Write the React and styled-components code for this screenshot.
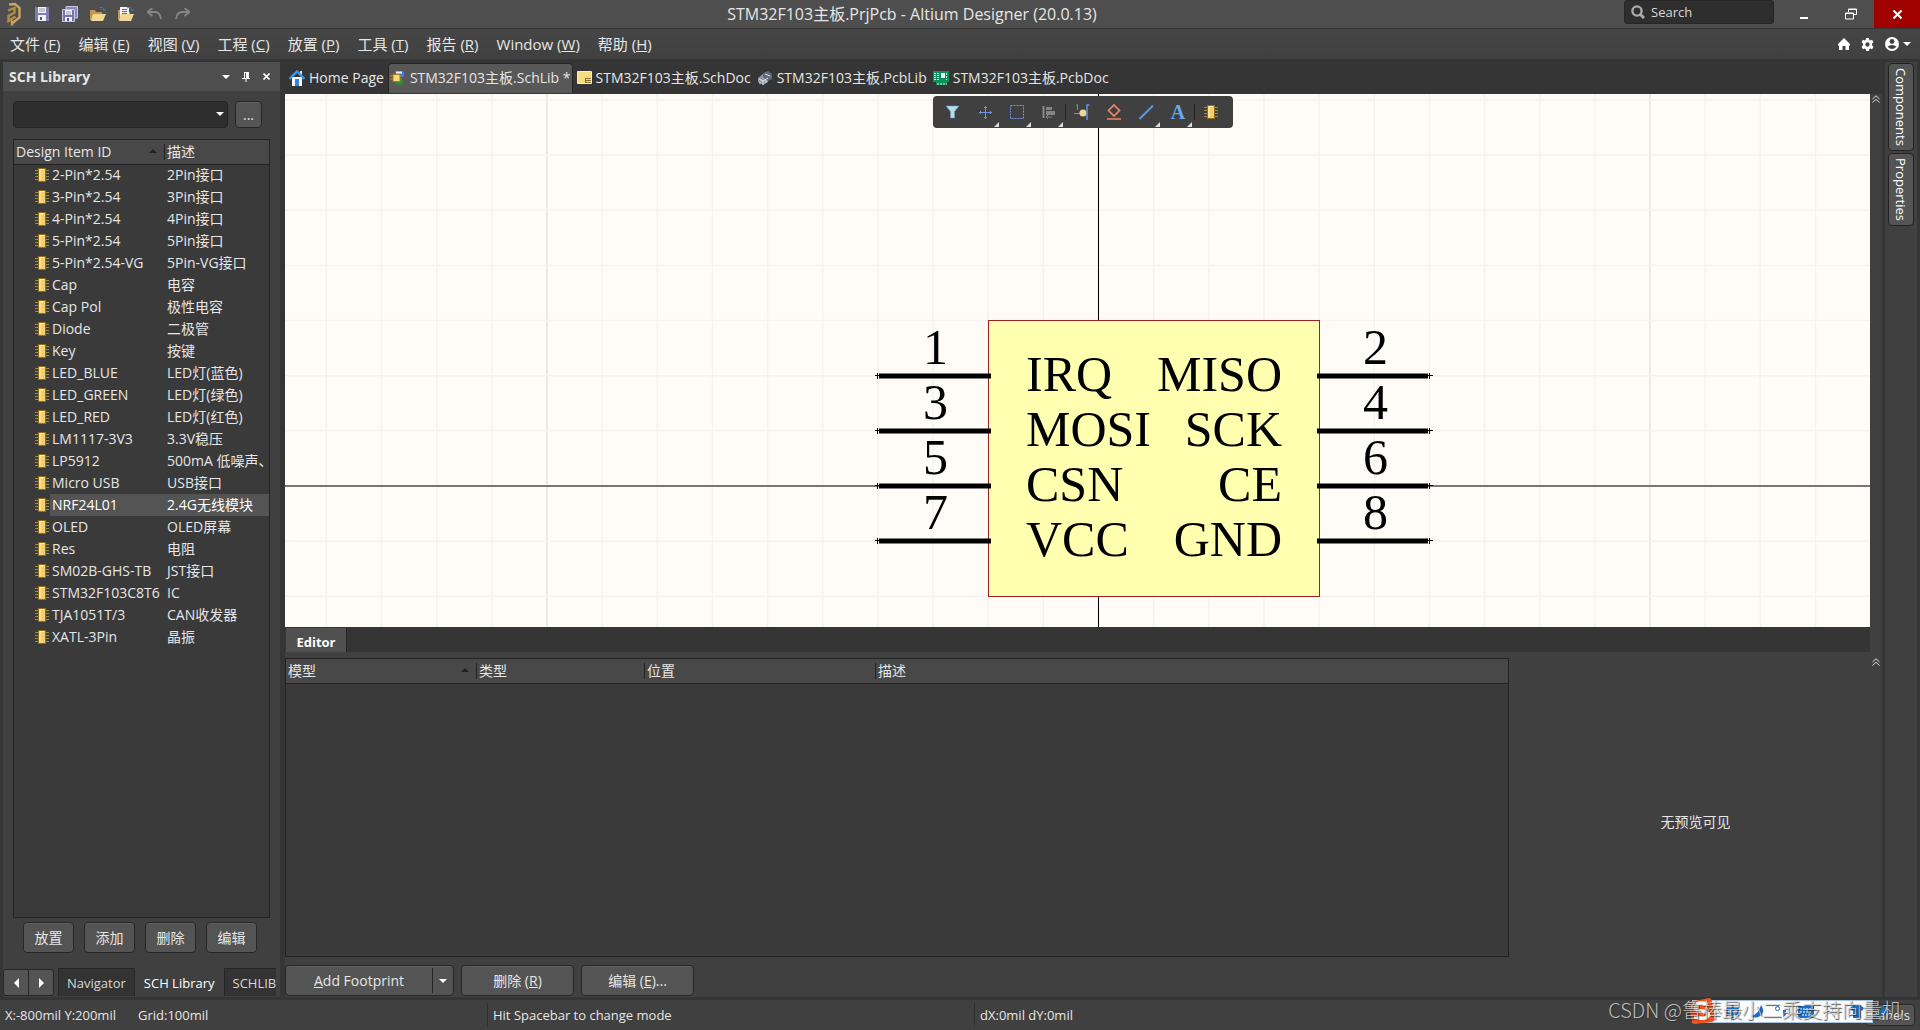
import React from 'react'
import styled, { createGlobalStyle } from 'styled-components'

const GlobalStyle = createGlobalStyle`
  * {
    box-sizing: border-box;
  }
  body {
    margin: 0;
    background: #353535;
    color: #e6e6e6;
    font-family: 'Open Sans', 'Noto Sans CJK SC', sans-serif;
    font-size: 14px;
    line-height: 20px;
  }
  button, input, select {
    font: inherit;
    color: inherit;
  }
  svg {
    display: block;
    flex: none;
  }
`

const Page = styled.div`
  display: flex;
  flex-direction: column;
  min-height: 100vh;
`

/* title bar */

const TitleBar = styled.header`
  display: flex;
  align-items: stretch;
  height: 29px;
  background: #4e4e4e;
  border-bottom: 1px solid #333;
`
const QuickAccess = styled.div`
  display: flex;
  align-items: center;
  gap: 12px;
  padding-left: 6px;
`
const IconButton = styled.button`
  display: flex;
  align-items: center;
  justify-content: center;
  width: ${(p) => p.$w || 16}px;
  padding: 0;
  border: 0;
  background: ${(p) => p.$bg || 'none'};
`
const WindowTitle = styled.h1`
  flex: 1;
  margin: 0;
  padding-left: 10px;
  font-size: 16px;
  font-weight: 400;
  line-height: 28px;
  text-align: center;
`
const SearchBox = styled.label`
  display: flex;
  align-items: center;
  gap: 6px;
  width: 150px;
  height: 24px;
  margin-right: 6px;
  padding-left: 6px;
  background: #2e2e2e;
  border: 1px solid #262626;
  border-radius: 3px;
  input {
    width: 110px;
    padding: 0;
    border: 0;
    outline: 0;
    background: none;
    font-size: 13px;
  }
  input::placeholder {
    color: #d8d8d8;
    opacity: 1;
  }
`

/* menu bar */

const MenuBar = styled.nav`
  display: flex;
  align-items: center;
  gap: 18px;
  height: 30px;
  padding: 0 8px 0 10px;
  background: linear-gradient(#464646, #404040);
`
const MenuItem = styled.button`
  padding: 0;
  border: 0;
  background: none;
  font-size: 15px;
  white-space: nowrap;
`
const MenuTools = styled.div`
  display: flex;
  align-items: center;
  gap: 10px;
  margin-left: auto;
`

/* workspace */

const Workspace = styled.main`
  display: flex;
  flex: 1;
  padding: 0 3px;
  background: #353535;
  border-bottom: 3px solid #353535;
`
const LibraryPanel = styled.section`
  display: flex;
  flex-direction: column;
  width: 277px;
  margin-top: 3px;
  padding-bottom: 1px;
  background: #404040;
`
const PanelHeader = styled.div`
  display: flex;
  align-items: center;
  height: 29px;
  padding: 0 4px 0 6px;
  background: #4e4e4e;
  h2 {
    flex: 1;
    margin: 0;
    font-size: 14px;
    font-weight: 700;
  }
`
const FilterRow = styled.div`
  display: flex;
  gap: 7px;
  padding: 10px 18px 11px 10px;
`
const ComboWrap = styled.label`
  position: relative;
  flex: 1;
  select {
    width: 100%;
    height: 27px;
    appearance: none;
    background: #2e2e2e;
    border: 1px solid #242424;
    border-radius: 4px;
  }
  svg {
    position: absolute;
    right: 4px;
    top: 11px;
  }
`
const Button = styled.button`
  display: flex;
  align-items: center;
  justify-content: center;
  width: ${(p) => p.$w}px;
  height: ${(p) => p.$h || 31}px;
  padding: 0;
  background: #545454;
  border: 1px solid #262626;
  border-radius: 4px;
  box-shadow: inset 0 1px #606060;
  white-space: pre;
`
const TableBox = styled.div`
  flex: 1;
  margin: ${(p) => p.$margin || 0};
  background: #3a3a3a;
  border: 1px solid #232323;
`
const Grid = styled.table`
  width: 100%;
  table-layout: fixed;
  border-collapse: collapse;
  th {
    position: relative;
    height: 24px;
    padding: 0 2px;
    background: #484848;
    border-bottom: 1px solid #232323;
    font-weight: 400;
    text-align: left;
  }
  th + th {
    background: linear-gradient(#232323, #232323) 0 4px / 1px 16px no-repeat #484848;
    padding-left: 3px;
  }
  th svg {
    position: absolute;
    right: 7px;
    top: 9px;
  }
  td {
    height: 22px;
    padding: 0 0 0 2px;
    white-space: nowrap;
  }
  td:last-child {
    padding-left: 3px;
  }
`
const ItemRow = styled.tr`
  td + td {
    background: ${(p) => (p.$selected ? '#545454' : 'none')};
    color: ${(p) => (p.$selected ? '#fff' : '#e6e6e6')};
  }
  td:first-child {
    padding-left: 21px;
  }
`
const PanelActions = styled.div`
  display: flex;
  gap: 10px;
  padding: 4px 20px 15px;
`
const PanelTabs = styled.div`
  display: flex;
  height: 28px;
  overflow: hidden;
`
const Arrows = styled.div`
  display: flex;
  width: 51px;
  height: 27px;
  margin: 1px 4px 0 0;
  background: #545454;
  border: 1px solid #262626;
  border-radius: 3px;
  button + button {
    border-left: 1px solid #262626;
  }
`
const PanelTab = styled.button`
  flex: none;
  padding: 0 8px;
  border: 1px solid ${(p) => (p.$active ? '#404040' : '#262626')};
  border-width: 1px 1px 0;
  background: ${(p) => (p.$active ? '#404040' : '#333')};
  color: ${(p) => (p.$active ? '#fff' : '#d8d8d8')};
  font-size: 13px;
  &:last-child {
    padding-right: 0;
    border-right: 0;
  }
`

/* documents */

const Center = styled.section`
  position: relative;
  display: flex;
  flex: 1;
  flex-direction: column;
  min-width: 0;
  margin-left: 5px;
`
const DocTabs = styled.div`
  display: flex;
  align-items: flex-start;
  gap: 2px;
  height: 35px;
  padding: 4px 0 0 2px;
`
const DocTab = styled.button`
  display: flex;
  align-items: center;
  gap: 4px;
  height: 30px;
  padding: 0 1px 2px;
  border: 1px solid ${(p) => (p.$active ? '#262626' : 'transparent')};
  border-bottom: 0;
  border-radius: 4px 4px 0 0;
  background: ${(p) => (p.$active ? '#585858' : 'none')};
  white-space: nowrap;
`
const Row = styled.div`
  display: flex;
  flex: ${(p) => p.$flex || 'none'};
`
const Sheet = styled.div`
  flex: 1;
  min-width: 0;
  background: #fffcf7;
  svg {
    width: 100%;
    height: 100%;
  }
`
const Strip = styled.div`
  width: 12px;
  padding: ${(p) => p.$top || 1}px 0 0 2px;
  background: #404040;
`
const FloatingTools = styled.div`
  position: absolute;
  left: 50%;
  top: 37px;
  display: flex;
  align-items: center;
  width: 300px;
  height: 32px;
  margin-left: -151px;
  padding-left: 4px;
  background: #404040;
  border-radius: 4px;
`
const Tool = styled.button`
  position: relative;
  display: flex;
  align-items: center;
  justify-content: center;
  width: 32px;
  height: 32px;
  padding: 0;
  border: 0;
  background: none;
  svg {
    overflow: visible;
  }
  &::after {
    content: '';
    position: absolute;
    right: 2px;
    bottom: 1px;
    display: ${(p) => (p.$more ? 'block' : 'none')};
    border-left: 5px solid transparent;
    border-bottom: 5px solid #ddd;
  }
`
const ToolDivider = styled.i`
  width: 1px;
  height: 16px;
  background: #222;
`
const EditorTabs = styled.div`
  flex: 1;
  height: 25px;
  padding: 1px 0 0 1px;
  background: #353535;
`
const EditorTab = styled.button`
  width: 61px;
  height: 24px;
  padding: 3px 0 0;
  border: 0;
  border-right: 1px solid #262626;
  background: #505050;
  color: #fff;
  font-size: 13px;
  font-weight: 700;
`
const EditorBody = styled.div`
  display: flex;
  height: 345px;
  background: #404040;
`
const ModelArea = styled.div`
  display: flex;
  flex: 1224;
  flex-direction: column;
  padding-top: 6px;
`
const ModelActions = styled.div`
  display: flex;
  gap: 7px;
  padding: 8px 0 1px;
`
const SplitButton = styled(Button)`
  span {
    flex: 1;
  }
  i {
    display: flex;
    align-items: center;
    justify-content: center;
    width: 21px;
    height: 25px;
    border-left: 1px solid #262626;
  }
`
const Preview = styled.div`
  display: flex;
  flex: 349;
  align-items: center;
  justify-content: center;
  padding: 0 0 6px 12px;
`
const SideDock = styled.aside`
  display: flex;
  flex-direction: column;
  gap: 2px;
  width: 32px;
  margin: 3px 0 0 3px;
  padding: 1px 3px;
  background: #404040;
`
const SideTab = styled.button`
  width: 26px;
  padding: 4px 1px;
  writing-mode: vertical-rl;
  text-align: left;
  background: #545454;
  border: 1px solid #222;
  border-radius: 4px;
  color: #fff;
  font-size: 13px;
`

/* status bar */

const StatusBar = styled.footer`
  position: relative;
  display: flex;
  align-items: center;
  height: 30px;
  padding-left: 5px;
  background: #404040;
  font-size: 13px;
`
const StatusCell = styled.span`
  width: ${(p) => p.$w}px;
  padding-left: ${(p) => (p.$line ? 5 : 0)}px;
  border-left: ${(p) => (p.$line ? '1px solid #303030' : '0')};
  line-height: 24px;
  white-space: pre;
`
const PanelsButton = styled(Button)`
  margin: 0 5px 0 auto;
`
const InputMethodBar = styled.div`
  position: absolute;
  right: 47px;
  top: 0;
  display: flex;
  align-items: center;
  gap: 11px;
  width: 181px;
  height: 23px;
  padding-left: 32px;
  background: #fbfdff;
  border: 1px solid #a9c3dd;
  color: #1a6fc9;
  font-size: 15px;
  font-weight: 700;
  > svg:first-child {
    position: absolute;
    left: -5px;
    top: -4px;
  }
`
const Watermark = styled.div`
  position: absolute;
  right: 18px;
  top: -5px;
  color: rgba(215, 215, 215, 0.85);
  font-family: 'Noto Sans CJK SC', sans-serif;
  font-size: 20px;
  font-weight: 300;
  line-height: 30px;
  text-shadow: 1px 1px 1px rgba(40, 40, 40, 0.8);
  white-space: nowrap;
`

/* icons */

const Caret = ({ w = 8, color = '#fff' }) => (
  <svg width={w} height={w / 2} viewBox="0 0 8 4"><path d="M0 0h8L4 4z" fill={color} /></svg>
)
const SortMark = () => (
  <svg width="8" height="4" viewBox="0 0 8 4"><path d="M0 4h8L4 0z" fill="#222" /></svg>
)
const ChevronsUp = () => (
  <svg width="8" height="8" viewBox="0 0 8 8" fill="none" stroke="#ddd"><path d="M0.5 4L4 0.8 7.5 4M0.5 7.5L4 4.3 7.5 7.5" /></svg>
)
const ChipIcon = () => (
  <svg width="14" height="14" viewBox="0 0 14 14">
    <path d="M0 2.5h14M0 5.5h14M0 8.5h14M0 11.5h14" stroke="#a58a38" />
    <rect x="3.5" y="0.5" width="7" height="13" fill="#f6cf6d" stroke="#8e6d20" />
    <path d="M5 12V1.500h4" stroke="#fff0b8" fill="none" />
  </svg>
)
const LogoIcon = () => (
  <svg width="14" height="24" viewBox="0 0 14 24" fill="none" stroke="#c9a45c" strokeWidth="2.400">
    <path d="M2 2.500L8 2l4.500 4v9.500L5.500 21" />
    <path d="M1 8.500L7.500 6v4.500L1.500 14v5l7-4.500" stroke="#b18d48" />
    <path d="M5 18.500v5" />
  </svg>
)
const SaveIcon = () => (
  <svg width="14" height="14" viewBox="0 0 14 14">
    <path d="M0 0h13l1 1v13H0z" fill="#7f7cb8" />
    <path d="M3 0h8v6H3zM3 8h8v6H3z" fill="#f1f2f7" />
    <path d="M4 2h6M4 4h6" stroke="#9a9ab0" />
    <path d="M5 10h2v3H5z" fill="#55539a" />
  </svg>
)
const SaveAllIcon = () => (
  <svg width="16" height="16" viewBox="0 0 16 16">
    <path d="M4 0.500h11.500v11.500H4z" fill="#8b86c4" stroke="#c9c7e6" />
    <path d="M0.500 3.500h12v12h-12z" fill="#7772b6" stroke="#c9c7e6" />
    <path d="M3 4h7v5H3zM3 11h7v4H3z" fill="#f1f2f7" />
    <path d="M4 6h5M4 8h5" stroke="#9a9ab0" />
    <path d="M5 12h2v3H5z" fill="#55539a" />
  </svg>
)
const FolderIcon = ({ page }) => (
  <svg width="16" height="16" viewBox="0 0 16 16">
    <path d="M0 4h5l1 2h6v8H0z" fill="#c5974e" />
    {page && <path d="M2 1h9v10H2z" fill="#eef2f6" />}
    {page && <path d="M4 3.500h5M4 5.500h5M4 7.500h5" stroke="#3a78b8" />}
    <path d="M3 8h13l-3 7H1z" fill="#f2d694" />
    <path d="M9 2q4-2 5 2M12.500 3l2 2 1.500-2.500" stroke="#3b7fa8" fill="none" />
  </svg>
)
const UndoIcon = ({ flip }) => (
  <svg width="15" height="12" viewBox="0 0 15 12">
    <g transform={flip ? 'translate(15 0) scale(-1 1)' : undefined}>
      <path d="M5.500 0L0.500 4l5 4M1 4h7q5 0 6 7" fill="none" stroke="#858585" strokeWidth="1.800" />
    </g>
  </svg>
)
const SearchIcon = () => (
  <svg width="14" height="14" viewBox="0 0 14 14" fill="none" stroke="#aaa"><circle cx="6" cy="6" r="4.600" strokeWidth="2.400" /><path d="M9.500 9.500L13 13" strokeWidth="3" /></svg>
)
const HomeIcon = () => (
  <svg width="12" height="12" viewBox="0 0 12 12"><path d="M6 0L0 6v1.500h1V12h3.500V8h3v4H11V7.500h1V6z" fill="#fff" /></svg>
)
const GearIcon = () => (
  <svg width="13" height="13" viewBox="0 0 24 24"><path fill="#fff" fillRule="evenodd" d="M9.500 0h5l.7 3.400 2 1.100 3.300-1.100 2.500 4.300L20.400 10v4l2.600 2.300-2.500 4.300-3.300-1.100-2 1.100-.7 3.400h-5l-.7-3.400-2-1.100-3.300 1.100L1 16.300 3.600 14v-4L1 7.700l2.500-4.300 3.300 1.100 2-1.100zM12 8a4 4 0 100 8 4 4 0 000-8z" /></svg>
)
const UserIcon = () => (
  <svg width="14" height="14" viewBox="0 0 14 14"><circle cx="7" cy="7" r="7" fill="#fff" /><circle cx="7" cy="4.500" r="2.400" fill="#404040" /><path d="M2.500 9.500q4.500-3 9 0-4.500 5-9 0z" fill="#404040" /></svg>
)
const HouseTabIcon = () => (
  <svg width="16" height="16" viewBox="0 0 16 16">
    <path d="M11 1h2v5h-2z" fill="#d9e6f5" />
    <path d="M3 7h10v9H3z" fill="#f4f8fd" />
    <path d="M0.500 9L8 1.500 15.500 9" stroke="#3c95ee" strokeWidth="2.400" fill="none" />
    <path d="M6 9h4v7H6z" fill="#2f86de" />
  </svg>
)
const SchLibIcon = () => (
  <svg width="16" height="16" viewBox="0 0 16 16">
    <path d="M5 1h8q3 3 0 6H6z" fill="#3b7de0" /><path d="M6 1.500h6v2H6z" fill="#e8f1ff" />
    <path d="M6 10h7v3l-3 3-4-2z" fill="#2f8a38" />
    <path d="M0 6h12M0 9h12" stroke="#b08a2e" />
    <path d="M3 4.500h7v7H3z" fill="#ffd876" stroke="#a67c20" />
  </svg>
)
const SchDocIcon = () => (
  <svg width="15" height="13" viewBox="0 0 15 13">
    <path d="M0.500 0.500h14v12h-14z" fill="#f8dc83" stroke="#fff0b4" />
    <path d="M8 7.500h6M8 9.500h6M8 11.500h6M8.500 7v5" stroke="#8b6f2c" />
  </svg>
)
const PcbLibIcon = () => (
  <svg width="16" height="14" viewBox="0 0 16 14">
    <path d="M1 7l5-4 5 3v5l-5 3-5-3z" fill="#8d98a8" />
    <path d="M6 2l5-2 4 3v5l-4 2-5-4z" fill="#5f6b7c" />
    <path d="M2 8l4 2 5-3M3 11v2M6 10v4M9 9v3M8 3l5 2" stroke="#dde4ec" fill="none" />
  </svg>
)
const PcbDocIcon = () => (
  <svg width="16" height="14" viewBox="0 0 16 14">
    <path d="M0 0h16v11h-2v3H3v-3H0z" fill="#0d8f5b" />
    <path d="M1 2.500h5M1 4.500h5M1 6.500h5M1 8.500h5M4 13h10M13.500 2v7" stroke="#c9f2df" strokeDasharray="2 1" />
    <path d="M8 2h4v5H8z" fill="#e9fff5" />
  </svg>
)

const toolIcons = [
  { name: 'Filter', art: <path d="M1 2h13L9.500 7.500V14h-4V7.500z" fill="#b5dcea" stroke="#6ba2b8" strokeWidth="0.500" /> },
  { name: 'Move', more: true, art: <path d="M8.500 2v13M2 8.500h13M7 3.500h3M7 13.500h3M3.500 7v3M13.500 7v3" stroke="#6a94e6" fill="none" /> },
  { name: 'Select', more: true, art: <path d="M1.500 1.500h13v13h-13z" stroke="#7593ea" fill="none" strokeDasharray="2 1" /> },
  { name: 'Align', more: true, art: <><path d="M2.500 2v12" stroke="#888" strokeWidth="2" /><path d="M5 3h6v3H5zM5 7h9v4H5z" fill="#858585" /><path d="M5 13h6M7 11l-2 2 2 2" stroke="#858585" fill="none" /></> },
  { divider: true, name: 'd1' },
  { name: 'Place pin', art: <><path d="M0 9.500h8" stroke="#a88e63" /><path d="M2 1.500l1.500-1V6" stroke="#888" fill="none" /><circle cx="9" cy="9" r="3.500" fill="#f3d391" /><path d="M15.500 1H13v15" stroke="#5f93de" strokeWidth="1.500" fill="none" /></> },
  { name: 'Symbol', art: <path d="M8 1l5.500 5.500L8 12 2.500 6.500zM1 15h14" stroke="#ef8662" strokeWidth="1.700" fill="none" /> },
  { name: 'Line', more: true, art: <path d="M1.500 15L15 1.500" stroke="#559be8" strokeWidth="2" /> },
  { name: 'Text', more: true, art: <text x="8" y="15" textAnchor="middle" fill="#65a9ee" fontSize="20" fontWeight="700" fontFamily="Liberation Serif, serif">A</text> },
  { divider: true, name: 'd2' },
]

/* data */

const items = [
  ['2-Pin*2.54', '2Pin接口'],
  ['3-Pin*2.54', '3Pin接口'],
  ['4-Pin*2.54', '4Pin接口'],
  ['5-Pin*2.54', '5Pin接口'],
  ['5-Pin*2.54-VG', '5Pin-VG接口'],
  ['Cap', '电容'],
  ['Cap Pol', '极性电容'],
  ['Diode', '二极管'],
  ['Key', '按键'],
  ['LED_BLUE', 'LED灯(蓝色)'],
  ['LED_GREEN', 'LED灯(绿色)'],
  ['LED_RED', 'LED灯(红色)'],
  ['LM1117-3V3', '3.3V稳压'],
  ['LP5912', '500mA 低噪声、'],
  ['Micro USB', 'USB接口'],
  ['NRF24L01', '2.4G无线模块'],
  ['OLED', 'OLED屏幕'],
  ['Res', '电阻'],
  ['SM02B-GHS-TB', 'JST接口'],
  ['STM32F103C8T6', 'IC'],
  ['TJA1051T/3', 'CAN收发器'],
  ['XATL-3Pin', '晶振'],
]

const menus = [
  ['文件', 'F'], ['编辑', 'E'], ['视图', 'V'], ['工程', 'C'], ['放置', 'P'],
  ['工具', 'T'], ['报告', 'R'], ['Window', 'W'], ['帮助', 'H'],
]

const pins = [
  ['IRQ', 'MISO'],
  ['MOSI', 'SCK'],
  ['CSN', 'CE'],
  ['VCC', 'GND'],
]

const STEP = 55.15
const ORIGIN = { x: 813.5, y: 392 }

const Schematic = () => {
  const cols = Array.from({ length: 29 }, (_, i) => i - 14)
  const rows = Array.from({ length: 10 }, (_, i) => i - 7)
  return (
    <svg viewBox="0 0 1585 533" preserveAspectRatio="xMidYMid slice">
      {cols.map((n) => (
        <path key={n} d={`M${ORIGIN.x + n * STEP} 0v533`} stroke={n % 10 ? '#f3f3f0' : '#e4e4e1'} strokeWidth="1.500" />
      ))}
      {rows.map((n) => (
        <path key={n} d={`M0 ${ORIGIN.y + n * STEP}h1585`} stroke="#f3f3f0" strokeWidth="1.500" />
      ))}
      <path d="M813.500 0v533" stroke="#000" />
      <path d="M0 392h1585" stroke="#777" strokeWidth="2" />
      <rect x="703.500" y="226.500" width="331" height="276" fill="#ffffb0" stroke="#a02020" />
      {pins.map(([left, right], i) => {
        const y = 282 + i * 55
        return (
          <g key={left} fill="#000" stroke="none" fontFamily="Liberation Serif, serif" fontSize="50">
            <path d={`M594 ${y}h112M1032 ${y}h111`} stroke="#000" strokeWidth="5" />
            <path d={`M590 ${y - 0.5}h6M592.5 ${y - 3}v6M1142 ${y - 0.5}h6M1144.5 ${y - 3}v6`} stroke="#000" />
            <text x="663" y={y - 12} textAnchor="end">{i * 2 + 1}</text>
            <text x="1078" y={y - 12}>{i * 2 + 2}</text>
            <text x="741" y={y + 15}>{left}</text>
            <text x="997" y={y + 15} textAnchor="end">{right}</text>
          </g>
        )
      })}
    </svg>
  )
}

const App = () => {
  return (
    <Page>
      <GlobalStyle />
      <TitleBar>
        <QuickAccess>
          <IconButton aria-label="Altium"><LogoIcon /></IconButton>
          <IconButton aria-label="Save"><SaveIcon /></IconButton>
          <IconButton aria-label="Save all"><SaveAllIcon /></IconButton>
          <IconButton aria-label="Open"><FolderIcon /></IconButton>
          <IconButton aria-label="Open project"><FolderIcon page /></IconButton>
          <IconButton aria-label="Undo"><UndoIcon /></IconButton>
          <IconButton aria-label="Redo"><UndoIcon flip /></IconButton>
        </QuickAccess>
        <WindowTitle>STM32F103主板.PrjPcb - Altium Designer (20.0.13)</WindowTitle>
        <SearchBox>
          <SearchIcon />
          <input type="text" placeholder="Search" aria-label="Search" />
        </SearchBox>
        <IconButton $w={47} aria-label="Minimize">
          <svg width="8" height="12" viewBox="0 0 8 12"><path d="M0 9h8v2H0z" fill="#fff" /></svg>
        </IconButton>
        <IconButton $w={47} aria-label="Restore">
          <svg width="12" height="12" viewBox="0 0 12 12" fill="none" stroke="#fff"><path d="M3.500 4V1h8v5.500H9M3.500 1.500h8M0.500 5h8v6h-8zM0.500 5.500h8" /></svg>
        </IconButton>
        <IconButton $w={46} $bg="#a00000" aria-label="Close">
          <svg width="9" height="9" viewBox="0 0 9 9"><path d="M0.500 0.500l8 8M8.500 0.500l-8 8" stroke="#fff" strokeWidth="2" /></svg>
        </IconButton>
      </TitleBar>

      <MenuBar>
        {menus.map(([label, key]) => (
          <MenuItem key={key}>{label} (<u>{key}</u>)</MenuItem>
        ))}
        <MenuTools>
          <IconButton $w={13} aria-label="Home"><HomeIcon /></IconButton>
          <IconButton $w={14} aria-label="Settings"><GearIcon /></IconButton>
          <IconButton $w={28} aria-label="Account"><UserIcon />&nbsp;<Caret /></IconButton>
        </MenuTools>
      </MenuBar>

      <Workspace>
        <LibraryPanel>
          <PanelHeader>
            <h2>SCH Library</h2>
            <IconButton $w={20} aria-label="Panel menu"><Caret /></IconButton>
            <IconButton $w={20} aria-label="Pin panel">
              <svg width="8" height="10" viewBox="0 0 8 10"><path d="M2 0h5v6H2zM0 6h8v1H0zM3.500 7h1v3h-1z" fill="#fff" /><path d="M3 1h1v5H3z" fill="#4e4e4e" /></svg>
            </IconButton>
            <IconButton $w={20} aria-label="Close panel">
              <svg width="7" height="7" viewBox="0 0 7 7"><path d="M0.500 0.500l6 6M6.500 0.500l-6 6" stroke="#fff" strokeWidth="1.600" /></svg>
            </IconButton>
          </PanelHeader>
          <FilterRow>
            <ComboWrap>
              <select aria-label="Library filter" />
              <Caret />
            </ComboWrap>
            <Button $w={27} $h={27}>...</Button>
          </FilterRow>
          <TableBox $margin="0 10px">
            <Grid>
              <colgroup>
                <col width="36" />
                <col width="114" />
                <col />
              </colgroup>
              <thead>
                <tr>
                  <th colSpan="2">Design Item ID<SortMark /></th>
                  <th>描述</th>
                </tr>
              </thead>
              <tbody>
                {items.map(([id, text]) => (
                  <ItemRow key={id} $selected={id === 'NRF24L01'}>
                    <td><ChipIcon /></td>
                    <td>{id}</td>
                    <td>{text}</td>
                  </ItemRow>
                ))}
              </tbody>
            </Grid>
          </TableBox>
          <PanelActions>
            <Button $w={51}>放置</Button>
            <Button $w={51}>添加</Button>
            <Button $w={51}>删除</Button>
            <Button $w={51}>编辑</Button>
          </PanelActions>
          <PanelTabs>
            <Arrows>
              <IconButton $w={24} aria-label="Previous"><svg width="5" height="10" viewBox="0 0 5 10"><path d="M5 0v10L0 5z" fill="#fff" /></svg></IconButton>
              <IconButton $w={25} aria-label="Next"><svg width="5" height="10" viewBox="0 0 5 10"><path d="M0 0v10l5-5z" fill="#fff" /></svg></IconButton>
            </Arrows>
            <PanelTab>Navigator</PanelTab>
            <PanelTab $active>SCH Library</PanelTab>
            <PanelTab>SCHLIB</PanelTab>
          </PanelTabs>
        </LibraryPanel>

        <Center>
          <DocTabs>
            <DocTab><HouseTabIcon />Home Page</DocTab>
            <DocTab $active><SchLibIcon />STM32F103主板.SchLib *</DocTab>
            <DocTab><SchDocIcon />STM32F103主板.SchDoc</DocTab>
            <DocTab><PcbLibIcon />STM32F103主板.PcbLib</DocTab>
            <DocTab><PcbDocIcon />STM32F103主板.PcbDoc</DocTab>
          </DocTabs>
          <Row $flex="1 1 0">
            <Sheet><Schematic /></Sheet>
            <Strip><ChevronsUp /></Strip>
          </Row>
          <FloatingTools>
            {toolIcons.map((t) => t.divider ? <ToolDivider key={t.name} /> : (
              <Tool key={t.name} $more={t.more} aria-label={t.name}>
                <svg width="16" height="16" viewBox="0 0 16 16">{t.art}</svg>
              </Tool>
            ))}
            <Tool aria-label="Place part"><ChipIcon /></Tool>
          </FloatingTools>
          <Row>
            <EditorTabs><EditorTab>Editor</EditorTab></EditorTabs>
            <Strip />
          </Row>
          <EditorBody>
            <ModelArea>
              <TableBox>
                <Grid>
                  <colgroup>
                    <col width="190" />
                    <col width="168" />
                    <col width="231" />
                    <col />
                  </colgroup>
                  <thead>
                    <tr>
                      <th>模型<SortMark /></th>
                      <th>类型</th>
                      <th>位置</th>
                      <th>描述</th>
                    </tr>
                  </thead>
                </Grid>
              </TableBox>
              <ModelActions>
                <SplitButton $w={169}><span><u>A</u>dd Footprint</span><i><Caret /></i></SplitButton>
                <Button $w={113}>删除 (<u>R</u>)</Button>
                <Button $w={113}>编辑 (<u>E</u>)...</Button>
              </ModelActions>
            </ModelArea>
            <Preview>无预览可见</Preview>
            <Strip $top={6}><ChevronsUp /></Strip>
          </EditorBody>
        </Center>

        <SideDock>
          <SideTab>Components</SideTab>
          <SideTab>Properties</SideTab>
        </SideDock>
      </Workspace>

      <StatusBar>
        <StatusCell $w={133}>X:-800mil Y:200mil</StatusCell>
        <StatusCell $w={349}>Grid:100mil</StatusCell>
        <StatusCell $w={487} $line>Hit Spacebar to change mode</StatusCell>
        <StatusCell $w={200} $line>dX:0mil dY:0mil</StatusCell>
        <PanelsButton $w={50} $h={22}>Panels</PanelsButton>
        <InputMethodBar>
          <svg width="27" height="27" viewBox="0 0 27 27">
            <path d="M1 5l20-4q2 0 3 3l3 18q0 2-3 3L7 27q-3 0-3-3L0 7q0-2 1-2z" fill="#f4511e" />
            <path d="M20 7Q8 4 7 10q0 4 7 4 8 1 6 5-3 4-14 1" fill="none" stroke="#fff" strokeWidth="3.500" />
          </svg>
          <span>中</span>
          <svg width="13" height="13" viewBox="0 0 13 13"><path d="M10 0q5 7-1 11-4 3-9 0 8-2 10-11z" fill="#1a6fc9" /></svg>
          <svg width="12" height="11" viewBox="0 0 12 11"><circle cx="2.500" cy="2.500" r="2" fill="none" stroke="#1a6fc9" /><path d="M8 4h3v4q-1 3-3 3 1-2 0-4z" fill="#1a6fc9" /></svg>
          <svg width="16" height="12" viewBox="0 0 16 12"><path d="M0 0h16v12H0z" fill="#1a6fc9" /><path d="M2 3h12M2 6h12M4 9h8" stroke="#fff" strokeDasharray="2 1" /></svg>
          <svg width="14" height="13" viewBox="0 0 14 13" fill="none" stroke="#9db8dc"><circle cx="5" cy="4" r="3" /><path d="M0 12q5-8 10 0M10 6h4M10 9h4" /></svg>
          <svg width="14" height="13" viewBox="0 0 14 13"><path d="M4 0q3 2 6 0l4 3-2 3-1-1v8H3V5L2 6 0 3z" fill="#1a6fc9" /></svg>
          <svg width="13" height="13" viewBox="0 0 13 13"><path d="M1 12l6-6" stroke="#1a6fc9" strokeWidth="3" /><path d="M12 3L9 5 8 4l2-3Q6 0 6 4t3 4 4-5z" fill="#1a6fc9" /></svg>
        </InputMethodBar>
        <Watermark>CSDN @鲁棒最小二乘支持向量机</Watermark>
      </StatusBar>
    </Page>
  )
}

export default App
